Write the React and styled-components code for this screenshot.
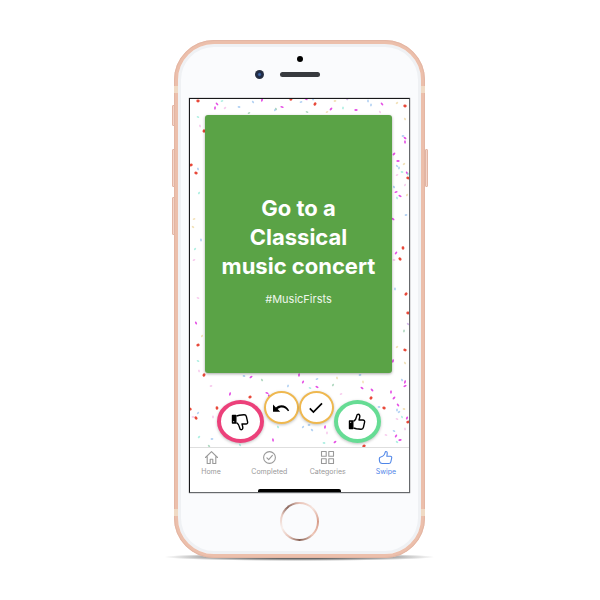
import React from "react";
import styled, { createGlobalStyle } from "styled-components";

const GlobalStyle = createGlobalStyle`
  *, *::before, *::after { box-sizing: border-box; }
  body { margin: 0; background: #fff; font-family: Inter, "Liberation Sans", sans-serif; }
`;

const Page = styled.main`
  min-height: 100vh;
  display: flex;
  justify-content: center;
  align-items: flex-start;
  padding: 40px 17px 40px 16px;
`;

const Phone = styled.div`
  position: relative;
  width: 100%;
  max-width: 251px;
  border: 4px solid #ecbfab;
  border-radius: 40px;
  outline: 1px solid #e3b6a4;
  outline-offset: -1px;
  background: #fafbfd;
  box-shadow: inset 0 0 0 3px #eff1f4;
  padding: 15px 11px 13px;

  &::before {
    content: "";
    position: absolute;
    z-index: -1;
    left: -14px;
    right: -14px;
    bottom: -7px;
    height: 8px;
    background: radial-gradient(closest-side, #666 40%, #aaa 70%, transparent);
  }
`;

const Band = styled.span`
  position: absolute;
  left: -4px;
  right: -4px;
  ${(p) => (p.$bottom ? "bottom: 38px;" : "top: 42px;")}
  height: 7px;
  border: solid #f0dac4;
  border-width: 0 4px;
`;

const SideKey = styled.span`
  position: absolute;
  ${(p) => (p.$right ? "right: -7px;" : "left: -6px;")}
  top: ${(p) => p.$top}px;
  height: ${(p) => p.$tall}px;
  width: 3px;
  background: #f4d5c9;
  border: 1px solid #e2b5a4;
  border-radius: 1px;
`;

const Earpiece = styled.div`
  display: grid;
  grid-template-columns: 1fr 40px 1fr;
  align-items: center;
  row-gap: 8px;
  padding-bottom: 19px;
`;

const Sensor = styled.span`
  grid-column: 1 / -1;
  justify-self: center;
  width: 6px;
  height: 6px;
  margin-top: -3px;
  border-radius: 50%;
  background: #000;
`;

const Camera = styled.span`
  justify-self: end;
  width: 9px;
  height: 9px;
  margin-right: 16px;
  border-radius: 50%;
  background: radial-gradient(#3f68ad 0 10%, #1f2b45 35%, #30343c);
`;

const Speaker = styled.span`
  height: 5px;
  border-radius: 3px;
  background: #373a3e;
`;

const Screen = styled.section`
  display: flex;
  flex-direction: column;
  border: 1px solid #66696c;
  border-top-color: #17181a;
  border-left-color: #17181a;
  box-shadow: 0 0 1px #555;
  background: #fff;
  overflow: hidden;
`;

const Deck = styled.div`
  position: relative;
  padding: 16px 17px 4px 15px;
`;

const Confetti = styled.svg`
  position: absolute;
  inset: 0;
  width: 100%;
  height: 100%;
`;

const Card = styled.article`
  position: relative;
  min-height: 258px;
  display: flex;
  flex-direction: column;
  align-items: center;
  justify-content: center;
  gap: 10px;
  padding-top: 12px;
  border-radius: 3px;
  background: #5aa346;
  color: #fff;
  text-align: center;
  box-shadow: 0 1px 3px rgba(0, 0, 0, 0.35);
`;

const Title = styled.h1`
  margin: 0;
  font-size: 22px;
  font-weight: 700;
  line-height: 29px;
`;

const Tag = styled.p`
  margin: 0;
  font-size: 11px;
  line-height: 16px;
  color: #eef6eb;
`;

const Actions = styled.div`
  position: relative;
  display: flex;
  justify-content: center;
  align-items: flex-end;
  margin: 18px -8px 0;
`;

const RoundButton = styled.button`
  flex: none;
  display: grid;
  place-items: center;
  padding: 0;
  width: ${(p) => (p.$small ? 35 : 47)}px;
  height: ${(p) => (p.$small ? 33 : 43)}px;
  margin-bottom: ${(p) => (p.$small ? 19 : 0)}px;
  border: ${(p) => (p.$small ? 2 : 4)}px solid ${(p) => p.$color};
  border-radius: 50%;
  background: #fff;
  color: #000;
  box-shadow: 0 1px 3px rgba(0, 0, 0, 0.25);
  cursor: pointer;
`;

const Tabs = styled.nav`
  display: flex;
  justify-content: space-between;
  padding: 2px 2px 13px 0;
  border-top: 1px solid #dedede;
  background: #fff;
`;

const Tab = styled.a`
  width: 42px;
  display: flex;
  flex-direction: column;
  align-items: center;
  gap: 2px;
  font-size: 7px;
  line-height: 9px;
  text-decoration: none;
  color: ${(p) => (p.$active ? "#4f86e8" : "#999")};
`;

const HomeBar = styled.div`
  align-self: center;
  width: 38%;
  height: 3px;
  border-radius: 2px 2px 0 0;
  background: #000;
`;

const HomeButton = styled.button`
  display: block;
  width: 39px;
  height: 39px;
  margin: 9px auto 0;
  padding: 0;
  border: 2px solid transparent;
  border-radius: 50%;
  background:
    linear-gradient(#fafbfd, #fafbfd) padding-box,
    conic-gradient(#e9c4b9, #f6e3dc 45deg, #d69b88 90deg, #efc9bb 135deg, #876256 180deg, #e6c3b8 215deg, #f8efec 250deg, #e9cbc1 290deg, #89665d 320deg, #e9c4b9) border-box;
`;

const COLORS = {
  r: "#e63525", m: "#e23be2", p: "#f3b5e6", b: "#91bdee",
  c: "#8ce8d6", y: "#ecd49a", g: "#8fc7a5", v: "#c39be0",
};

const PIECES = `r198,101 m217,104 m215,108 p225,108 b239,107 b253,102 m262,100 g249,113 m282,107 g276,109
b275,110 c222,101 c198,117 p200,126 r291,99 b301,102 m306,99 b313,99 r315,104 y335,101 v347,99 b368,101
m331,109 m356,110 m382,104 b371,105 y397,103 r405,106 p380,112 c343,108 y327,112 g307,112 y405,119
r204,131 r191,165 r196,173 b198,169 c199,193 y194,219 y193,227 b201,240 c195,249 b403,136 m405,138
m405,142 m394,154 m398,161 b397,166 b399,168 y404,164 c402,172 m407,173 c408,174 p397,175 r408,178
b394,187 p405,185 m396,192 m400,196 c397,198 y407,195 b406,215 m393,219 r403,248 m396,253 p394,260
r400,259 b395,289 r406,294 r408,313 v408,324 g404,331 y397,347 r405,350 y405,363 m393,361 p194,260
p198,298 m196,323 y202,336 r198,345 c198,361 p199,371 r204,375 p211,386 r190,409 r217,408 b198,413
p193,417 r196,418 p213,417 c199,437 b212,439 g209,446 m299,375 m251,377 b244,376 g262,380 m230,394
r250,397 m267,393 m269,396 m303,382 b317,379 m317,387 y337,378 g333,385 b360,375 m362,388 y363,382
r371,398 b379,407 m372,390 m391,392 m394,398 r384,408 m398,405 b397,410 b399,412 y404,409 b402,380
m405,382 m405,386 p397,419 c402,417 m407,418 r408,422 b394,431 p405,429 m396,436 m400,440 c397,442
m273,440 b303,427 b309,425 b312,430 p327,433 m335,442 c324,443 c240,445 m325,427 r364,446 p386,435
c278,427 b288,386 p341,394 c310,388`.trim().split(/\s+/).map((s, i) => {
  const [x, y] = s.slice(1).split(",").map(Number);
  return { kind: s[0], x: x - 190, y: y - 99, turn: (i * 47) % 180 };
});

function ConfettiLayer() {
  return (
    <Confetti viewBox="0 0 219 348" preserveAspectRatio="none" aria-hidden="true">
      {PIECES.map(({ kind, x, y, turn }, i) => (
        <ellipse
          key={i}
          cx={x}
          cy={y}
          rx={kind === "r" || kind === "m" ? 1.7 : 1.4}
          ry={kind === "r" ? 1.4 : 0.9}
          fill={COLORS[kind]}
          opacity={kind === "r" || kind === "m" ? 0.9 : 0.7}
          transform={`rotate(${turn} ${x} ${y})`}
        />
      ))}
    </Confetti>
  );
}

function Thumb({ down }) {
  return (
    <svg width="18" height="18" viewBox="0 0 18 18" aria-hidden="true">
      <g
        transform={down ? "matrix(1 0 0 -1 0 18)" : undefined}
        fill="none"
        stroke="#000"
        strokeWidth="1.4"
        strokeLinejoin="round"
      >
        <path d="M1.5 8h3.3v7.5H1.5z" fill="#000" />
        <path d="M5.5 8.3C7.4 7.1 8.3 5.4 8.6 3.3 8.8 1.9 9.3 1.3 10.1 1.3c1.5 0 2.1 1.4 1.5 3.5L11 7h3.9c1.3 0 2 .9 1.7 2.1l-1.2 5.2c-.3 1.3-1.3 2-2.5 1.9l-4.5-.5-2.9-.7" />
        <path d="M2.700 8.800v1.200" stroke="#fff" strokeWidth="0.8" />
      </g>
    </svg>
  );
}

const UndoIcon = () => (
  <svg width="18" height="12" viewBox="0 0 18 12" aria-hidden="true">
    <path d="M1 2.500v7.200h7.200L5.600 7.100C9 4.400 13.500 5.200 16 9.300l1.200-.8C14.400 3.100 8.400 1.700 3.900 5.400z" />
  </svg>
);

const CheckIcon = () => (
  <svg width="16" height="12" viewBox="0 0 16 12" aria-hidden="true">
    <path d="M1.800 6.400l3.600 3.600L14 1.300" fill="none" stroke="#000" strokeWidth="1.7" />
  </svg>
);

const TabSvg = styled.svg`
  width: 15px;
  height: 15px;
  fill: none;
  stroke: currentColor;
  stroke-width: 1.1;
  stroke-linejoin: round;
  stroke-linecap: round;
`;

const TABS = [
  { label: "Home", art: <path d="M1.5 7.500L7.500 1.700l6 5.800M3.200 6.500v7h3V9.300h2.600v4.200h3v-7" /> },
  { label: "Completed", art: <><circle cx="7.5" cy="7.5" r="5.900" /><path d="M4.900 7.900l1.800 1.800 3.700-4.300" /></> },
  { label: "Categories", art: <path d="M1.500 1.500h4.700v4.700H1.500zM8.800 1.500h4.700v4.700H8.800zM1.500 8.800h4.700v4.700H1.500zM8.800 8.800h4.700v4.700H8.800z" /> },
  { label: "Swipe", active: true, art: <path d="M1.300 8.700c0-1 .5-1.500 1.400-1.700C5 6.400 6.600 4.800 7.100 2.500c.2-.8.600-1.100 1.100-1 1.200.2 1.300 1.900.6 4.800h3.600c1.100 0 1.500.7 1.300 1.700l-.9 4c-.2 1-.9 1.500-1.900 1.500H4.300c-1.700 0-2.600-1-2.800-2.500z" /> },
];

export default function App() {
  return (
    <>
      <GlobalStyle />
      <Page>
        <Phone>
          <Band />
          <Band $bottom />
          <SideKey $top={61} $tall={21} />
          <SideKey $top={105} $tall={38} />
          <SideKey $top={153} $tall={38} />
          <SideKey $right $top={105} $tall={38} />
          <Earpiece>
            <Sensor />
            <Camera />
            <Speaker />
          </Earpiece>
          <Screen>
            <Deck>
              <ConfettiLayer />
              <Card>
                <Title>Go to a<br />Classical<br />music concert</Title>
                <Tag>#MusicFirsts</Tag>
              </Card>
              <Actions>
                <RoundButton $color="#ec407a" aria-label="Dislike"><Thumb down /></RoundButton>
                <RoundButton $small $color="#efb84f" aria-label="Undo"><UndoIcon /></RoundButton>
                <RoundButton $small $color="#efb84f" aria-label="Mark completed"><CheckIcon /></RoundButton>
                <RoundButton $color="#66dc94" aria-label="Like"><Thumb /></RoundButton>
              </Actions>
            </Deck>
            <Tabs>
              {TABS.map((t) => (
                <Tab key={t.label} href={`#${t.label.toLowerCase()}`} $active={t.active}>
                  <TabSvg viewBox="0 0 15 15" aria-hidden="true">{t.art}</TabSvg>
                  {t.label}
                </Tab>
              ))}
            </Tabs>
            <HomeBar />
          </Screen>
          <HomeButton aria-label="Home button" />
        </Phone>
      </Page>
    </>
  );
}
